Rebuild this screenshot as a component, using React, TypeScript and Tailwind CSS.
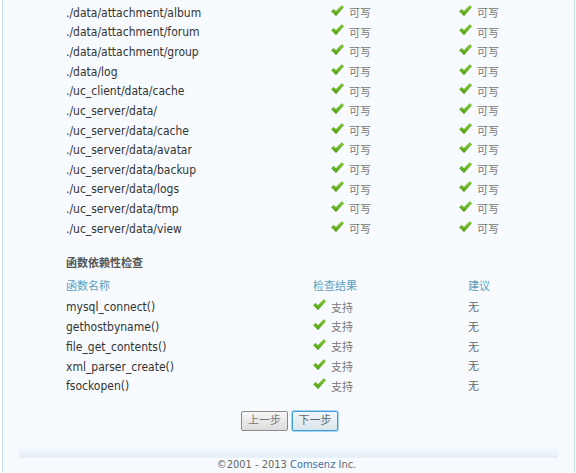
import React from "react";

const dirs = [
  "./data/attachment/album",
  "./data/attachment/forum",
  "./data/attachment/group",
  "./data/log",
  "./uc_client/data/cache",
  "./uc_server/data/",
  "./uc_server/data/cache",
  "./uc_server/data/avatar",
  "./uc_server/data/backup",
  "./uc_server/data/logs",
  "./uc_server/data/tmp",
  "./uc_server/data/view",
];

const funcs = [
  "mysql_connect()",
  "gethostbyname()",
  "file_get_contents()",
  "xml_parser_create()",
  "fsockopen()",
];

const font = {
  fontFamily: '"DejaVu Sans Condensed", Tahoma, "Noto Sans CJK SC", sans-serif',
};

// 绿色对勾
function Tick() {
  return (
    <svg width="13" height="12" viewBox="0 0 13 12" className="shrink-0">
      <defs>
        <linearGradient id="tk" x1="0" y1="0" x2="0" y2="1">
          <stop offset="0" stopColor="#8fd42a" />
          <stop offset="1" stopColor="#4a9e12" />
        </linearGradient>
      </defs>
      <path
        d="M0.5 6.2 L2.6 4.3 L5 6.6 L10.8 0.6 L12.6 2.3 L5 10.8 Z"
        fill="url(#tk)"
        stroke="#3f8f10"
        strokeWidth="0.5"
        strokeLinejoin="round"
      />
    </svg>
  );
}

function Ok({ label }: { label: string }) {
  return (
    <div className="flex items-center">
      <span className="-mt-[4px]">
        <Tick />
      </span>
      <span className="ml-[5px] mt-[3px] text-[11px] text-[#777]">{label}</span>
    </div>
  );
}

export default function App() {
  return (
    <div className="w-[576px] h-[473px] bg-white overflow-hidden" style={font}>
      <div className="ml-[2px] w-[573px] h-full border-l border-r border-[#c8dbe9] bg-[#f7fbff] text-[12px] text-[#333]">
        {/* 目录权限 */}
        <div className="pt-[3px]">
          {dirs.map((d) => (
            <div key={d} className="flex items-center h-[19.64px]">
              <div className="pl-[63px] w-[328px]">{d}</div>
              <div className="w-[128px]">
                <Ok label="可写" />
              </div>
              <Ok label="可写" />
            </div>
          ))}
        </div>

        {/* 函数依赖性检查 */}
        <div className="pl-[63px] mt-[16px] h-[20px] flex items-center font-bold text-[11px] text-[#555]">
          函数依赖性检查
        </div>
        <div className="flex items-center h-[20px] mt-[3px] text-[11px] text-[#5a9dbf]">
          <div className="pl-[63px] w-[310px]">函数名称</div>
          <div className="w-[155px]">检查结果</div>
          <div>建议</div>
        </div>
        {funcs.map((f) => (
          <div key={f} className="flex items-center h-[19.75px]">
            <div className="pl-[63px] w-[310px]">{f}</div>
            <div className="w-[155px]">
              <Ok label="支持" />
            </div>
            <div className="mt-[2px] text-[11px] text-[#666]">无</div>
          </div>
        ))}

        <div className="flex justify-center gap-[4px] mt-[15px] pl-[2px]">
          <button className="h-[20px] w-[47px] rounded-[2px] border border-[#8a8a8a] bg-gradient-to-b from-[#f6f6f6] to-[#dcdcdc] text-[11px] text-[#777]">
            上一步
          </button>
          <button className="h-[20px] w-[46px] rounded-[2px] border border-[#3c9fd6] bg-gradient-to-b from-[#f2f7fb] to-[#d9e4ec] text-[11px] text-[#666] shadow-[0_0_0_1px_#a8d6f0]">
            下一步
          </button>
        </div>

        <div className="mx-[16px] mt-[18px] h-[9px] w-[539px] bg-gradient-to-b from-[#f0f6fc] to-[#e6eff8]" />
        <div className="text-center text-[11px] leading-[12px] text-[#666] mt-[1px] pr-[4px]">
          ©2001 - 2013 <span className="text-[#3b6fa8]">Comsenz</span> Inc.
        </div>
      </div>
    </div>
  );
}
